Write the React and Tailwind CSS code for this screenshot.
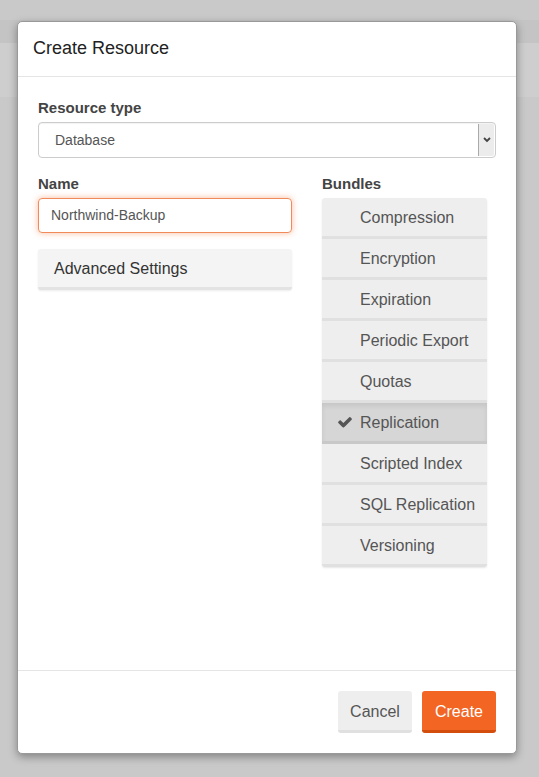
import React from "react";

const bundles = [
  { name: "Compression" },
  { name: "Encryption" },
  { name: "Expiration" },
  { name: "Periodic Export" },
  { name: "Quotas" },
  { name: "Replication", active: true },
  { name: "Scripted Index" },
  { name: "SQL Replication" },
  { name: "Versioning" },
];

const Check = () => (
  <svg width="16" height="16" viewBox="0 0 1792 1792" className="absolute left-[15px] top-[11px]">
    <path
      d="M1671 566q0 40-28 68l-724 724-136 136q-28 28-68 28t-68-28l-136-136-362-362q-28-28-28-68t28-68l136-136q28-28 68-28t68 28l294 295 656-657q28-28 68-28t68 28l136 136q28 28 28 68z"
      fill="#555"
    />
  </svg>
);

const App = () => {
  return (
    <div
      className="w-[539px] h-[777px] bg-[#c9c9c9] relative overflow-hidden"
      style={{ fontFamily: '"Liberation Sans", Arial, sans-serif' }}
    >
      <div className="h-[20px]" />
      <div className="h-[23px] bg-[#c4c4c4]" />
      <div className="h-[54px] bg-[#cecece]" />

      <div className="absolute left-[17px] top-[21px] w-[500px] h-[733px] bg-white rounded-[5px] border border-[#999] shadow-[0_3px_9px_rgba(0,0,0,0.35)] flex flex-col">
        <div className="h-[55px] border-b border-[#e5e5e5] px-[15px] flex items-center">
          <h4 className="text-[18px] text-[#222] mt-[-1px]">Create Resource</h4>
        </div>

        <div className="flex-1 px-[20px] pt-[22px]">
          <label className="block text-[15px] font-bold text-[#444] leading-[18px]">Resource type</label>
          <div className="mt-[5px] h-[36px] border border-[#ccc] rounded-[4px] flex items-stretch shadow-[inset_0_1px_1px_rgba(0,0,0,0.05)]">
            <div className="flex-1 flex items-center pl-[16px] text-[14px] text-[#555]">Database</div>
            <div className="w-[16px] my-[1px] mr-[1px] bg-[#ececec] border-l border-[#aaa] flex items-center justify-center rounded-r-[2px]">
              <svg width="8" height="6" viewBox="0 0 8 6">
                <path d="M1 1 L4 4 L7 1" stroke="#444" strokeWidth="1.8" fill="none" />
              </svg>
            </div>
          </div>

          <div className="flex mt-[17px]">
            <div className="w-[254px]">
              <label className="block text-[15px] font-bold text-[#444] leading-[18px]">Name</label>
              <div className="mt-[5px] h-[35px] border border-[#f08a5a] rounded-[4px] flex items-center pl-[12px] text-[14px] text-[#555] shadow-[0_0_6px_rgba(243,101,35,0.45)]">
                Northwind-Backup
              </div>
              <div className="mt-[16px] h-[41px] bg-[#f4f4f4] rounded-[3px] border-b-[3px] border-[#e3e3e3] flex items-center pl-[16px] pt-[1px] text-[16px] text-[#333] shadow-[0_1px_2px_rgba(0,0,0,0.08)]">
                Advanced Settings
              </div>
            </div>

            <div className="ml-[30px] w-[165px]">
              <label className="block text-[15px] font-bold text-[#444] leading-[18px]">Bundles</label>
              <div className="mt-[5px] rounded-[3px] overflow-hidden shadow-[0_1px_2px_rgba(0,0,0,0.1)]">
                {bundles.map((b) => (
                  <div
                    key={b.name}
                    className={
                      b.active
                        ? "relative h-[41px] bg-[#d6d6d6] border-b-[3px] border-[#c8c8c8] flex items-center pl-[38px] pt-[1px] text-[16px] text-[#555] shadow-[inset_0_3px_5px_rgba(0,0,0,0.08)]"
                        : "relative h-[41px] bg-[#eeeeee] border-b-[3px] border-[#e0e0e0] flex items-center pl-[38px] pt-[1px] text-[16px] text-[#555]"
                    }
                  >
                    {b.active && <Check />}
                    {b.name}
                  </div>
                ))}
              </div>
            </div>
          </div>
        </div>

        <div className="h-[83px] border-t border-[#e5e5e5] flex justify-end items-start pt-[20px] pr-[20px] gap-[10px]">
          <button className="h-[42px] w-[74px] bg-[#eeeeee] rounded-[3px] border-b-[3px] border-[#e0e0e0] pt-[2px] text-[16px] text-[#555]">
            Cancel
          </button>
          <button className="h-[42px] w-[74px] bg-[#f36523] rounded-[3px] border-b-[3px] border-[#d34d0d] pt-[2px] text-[16px] text-white">
            Create
          </button>
        </div>
      </div>
    </div>
  );
};

export default App;
